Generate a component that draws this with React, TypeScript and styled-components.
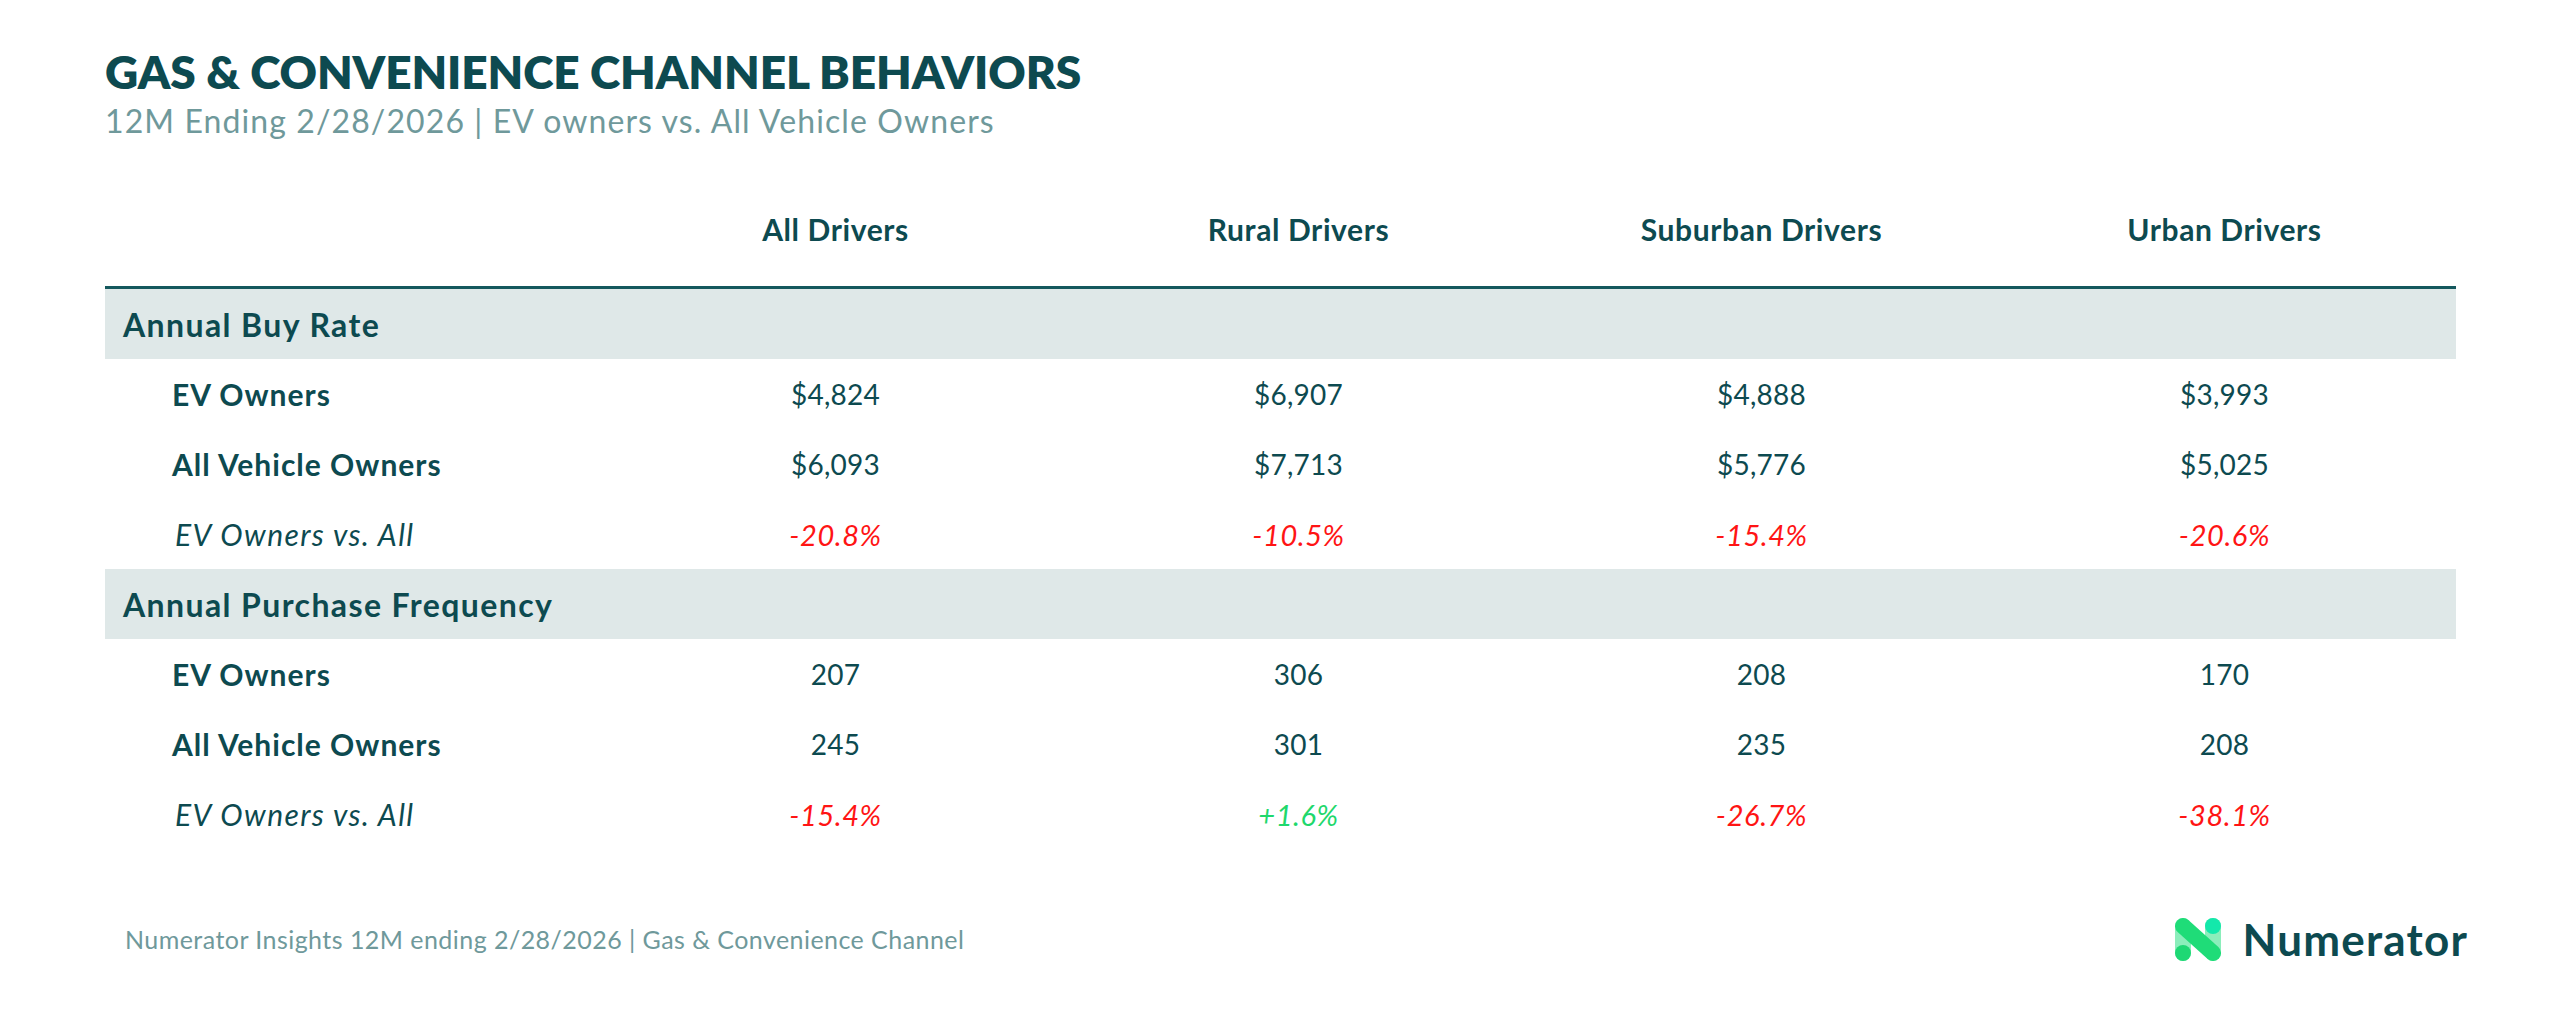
import React from "react";
import styled, { createGlobalStyle } from "styled-components";

const GlobalStyle = createGlobalStyle`
  html, body {
    margin: 0;
    padding: 0;
    background: #ffffff;
  }
  body {
    font-family: "Lato", "Open Sans", "Liberation Sans", sans-serif;
    color: #0d4a50;
  }
`;

type Tone = "neg" | "pos";

interface Metric {
  title: string;
  ev: string[];
  all: string[];
  diff: string[];
}

const columns = ["All Drivers", "Rural Drivers", "Suburban Drivers", "Urban Drivers"];

const metrics: Metric[] = [
  {
    title: "Annual Buy Rate",
    ev: ["$4,824", "$6,907", "$4,888", "$3,993"],
    all: ["$6,093", "$7,713", "$5,776", "$5,025"],
    diff: ["-20.8%", "-10.5%", "-15.4%", "-20.6%"],
  },
  {
    title: "Annual Purchase Frequency",
    ev: ["207", "306", "208", "170"],
    all: ["245", "301", "235", "208"],
    diff: ["-15.4%", "+1.6%", "-26.7%", "-38.1%"],
  },
];

const Page = styled.div`
  width: 2560px;
  height: 1016px;
  box-sizing: border-box;
  padding: 44px 104px 0 105px;
  display: flex;
  flex-direction: column;
`;

const Title = styled.h1`
  margin: 0;
  font-size: 46px;
  line-height: 55px;
  font-weight: 800;
  color: #0d4a50;
  letter-spacing: -0.1px;
`;

const Subtitle = styled.div`
  margin-top: 4px;
  font-size: 32px;
  line-height: 36px;
  letter-spacing: 1.1px;
  color: #6f999b;
`;

const Table = styled.div`
  margin-top: 72px;
  display: grid;
  grid-template-columns: 499px repeat(4, 1fr);
`;

const HeadCell = styled.div`
  padding-bottom: 39px;
  border-bottom: 3px solid #14585d;
  font-size: 30px;
  line-height: 36px;
  font-weight: 700;
  letter-spacing: 0.6px;
  text-align: center;
`;

const Band = styled.div`
  grid-column: 1 / -1;
  height: 70px;
  display: flex;
  align-items: center;
  padding-left: 18px;
  background: #dfe8e8;
  font-size: 32px;
  font-weight: 700;
  letter-spacing: 1.4px;
`;

const RowLabel = styled.div<{ $italic?: boolean }>`
  height: 70px;
  display: flex;
  align-items: center;
  padding-left: ${(p) => (p.$italic ? "70px" : "67px")};
  font-size: 30px;
  font-weight: ${(p) => (p.$italic ? 400 : 700)};
  font-style: ${(p) => (p.$italic ? "italic" : "normal")};
  letter-spacing: ${(p) => (p.$italic ? "1.4px" : "1px")};
`;

const Value = styled.div<{ $tone?: Tone }>`
  height: 70px;
  display: flex;
  align-items: center;
  justify-content: center;
  font-size: ${(p) => (p.$tone ? "29px" : "28px")};
  letter-spacing: ${(p) => (p.$tone ? "0.6px" : "0.2px")};
  font-style: ${(p) => (p.$tone ? "italic" : "normal")};
  color: ${(p) => (p.$tone === "neg" ? "#ff1414" : p.$tone === "pos" ? "#1ed86c" : "#0d4a50")};
`;

const Footer = styled.div`
  margin: 64px -12px 0 20px;
  display: flex;
  align-items: center;
  justify-content: space-between;
`;

const Source = styled.div`
  font-size: 25px;
  letter-spacing: 0.45px;
  color: #6f999b;
`;

const Brand = styled.div`
  display: flex;
  align-items: center;
  gap: 22px;
`;

const BrandName = styled.span`
  font-size: 44px;
  font-weight: 700;
  color: #0d4a50;
  letter-spacing: 1.2px;
`;

const LogoMark = () => (
  <svg width="46" height="43" viewBox="0 0 46 43">
    <rect x="0" y="0" width="16" height="43" rx="8" fill="#8beebb" />
    <rect x="30" y="0" width="16" height="43" rx="8" fill="#8beebb" />
    <line x1="8" y1="8" x2="38" y2="35" stroke="#1fdc78" strokeWidth="16" strokeLinecap="round" />
    <circle cx="8" cy="35" r="8" fill="#1ed874" />
    <circle cx="38" cy="8" r="8" fill="#13e8ab" />
  </svg>
);

const toneOf = (v: string): Tone => (v.startsWith("+") ? "pos" : "neg");

export default function App() {
  return (
    <>
      <GlobalStyle />
      <Page>
        <Title>GAS &amp; CONVENIENCE CHANNEL BEHAVIORS</Title>
        <Subtitle>12M Ending 2/28/2026 | EV owners vs. All Vehicle Owners</Subtitle>
        <Table>
          <HeadCell />
          {columns.map((c) => (
            <HeadCell key={c}>{c}</HeadCell>
          ))}
          {metrics.map((m) => (
            <React.Fragment key={m.title}>
              <Band>{m.title}</Band>
              <RowLabel>EV Owners</RowLabel>
              {m.ev.map((v, i) => (
                <Value key={"ev" + i}>{v}</Value>
              ))}
              <RowLabel>All Vehicle Owners</RowLabel>
              {m.all.map((v, i) => (
                <Value key={"all" + i}>{v}</Value>
              ))}
              <RowLabel $italic>EV Owners vs. All</RowLabel>
              {m.diff.map((v, i) => (
                <Value key={"d" + i} $tone={toneOf(v)}>
                  {v}
                </Value>
              ))}
            </React.Fragment>
          ))}
        </Table>
        <Footer>
          <Source>Numerator Insights 12M ending 2/28/2026 | Gas &amp; Convenience Channel</Source>
          <Brand>
            <LogoMark />
            <BrandName>Numerator</BrandName>
          </Brand>
        </Footer>
      </Page>
    </>
  );
}
